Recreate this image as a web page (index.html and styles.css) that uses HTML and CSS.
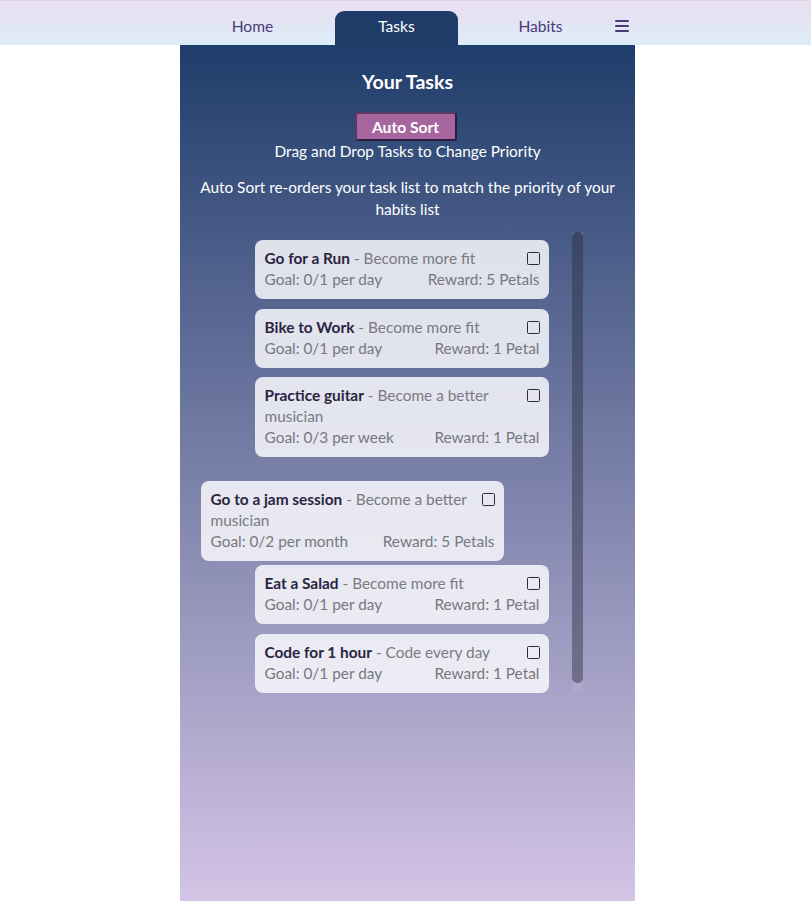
FILE: index.html
```html
<!DOCTYPE html>
<html lang="en">
<head>
<meta charset="utf-8">
<title>Your Tasks</title>
<link rel="stylesheet" href="styles.css">
</head>
<body>
<header class="topbar">
  <nav class="nav">
    <a class="nav-item">Home</a>
    <a class="nav-item active">Tasks</a>
    <a class="nav-item">Habits</a>
    <span class="burger" aria-label="Menu"><i></i><i></i><i></i></span>
  </nav>
</header>
<main class="page">
  <h1 class="title">Your Tasks</h1>
  <button class="sort-btn">Auto Sort</button>
  <p class="hint">Drag and Drop Tasks to Change Priority</p>
  <p class="info">Auto Sort re-orders your task list to match the priority of your habits list</p>
  <div class="list-wrap">
    <div class="list">
      <div class="card">
        <div class="row"><span class="name"><b>Go for a Run</b> - Become more fit</span><span class="check"></span></div>
        <div class="row meta"><span>Goal: 0/1 per day</span><span>Reward: 5 Petals</span></div>
      </div>
      <div class="card">
        <div class="row"><span class="name"><b>Bike to Work</b> - Become more fit</span><span class="check"></span></div>
        <div class="row meta"><span>Goal: 0/1 per day</span><span>Reward: 1 Petal</span></div>
      </div>
      <div class="card">
        <div class="row"><span class="name"><b>Practice guitar</b> - Become a better musician</span><span class="check"></span></div>
        <div class="row meta"><span>Goal: 0/3 per week</span><span>Reward: 1 Petal</span></div>
      </div>
      <div class="card dragging">
        <div class="row"><span class="name"><b>Go to a jam session</b> - Become a better musician</span><span class="check"></span></div>
        <div class="row meta"><span>Goal: 0/2 per month</span><span>Reward: 5 Petals</span></div>
      </div>
      <div class="card">
        <div class="row"><span class="name"><b>Eat a Salad</b> - Become more fit</span><span class="check"></span></div>
        <div class="row meta"><span>Goal: 0/1 per day</span><span>Reward: 1 Petal</span></div>
      </div>
      <div class="card">
        <div class="row"><span class="name"><b>Code for 1 hour</b> - Code every day</span><span class="check"></span></div>
        <div class="row meta"><span>Goal: 0/1 per day</span><span>Reward: 1 Petal</span></div>
      </div>
    </div>
    <div class="scrollbar"><div class="thumb"></div></div>
  </div>
</main>
</body>
</html>
```

FILE: styles.css
```css
* { box-sizing: border-box; }
html, body { margin: 0; padding: 0; }
body {
  background: #ffffff;
  font-family: Lato, "Open Sans", sans-serif;
  min-height: 100vh;
}
.topbar {
  height: 45px;
  background: linear-gradient(to bottom, #e9e2f3 0%, #e6e2f3 30%, #dcedf7 100%);
  border-top: 1px solid #ddd6e8;
}
.nav {
  width: 455px;
  margin-left: calc(50% - 225.5px);
  height: 44px;
  display: flex;
  align-items: flex-end;
  padding-left: 11px;
  gap: 21px;
}
.nav-item {
  width: 123px;
  height: 34px;
  display: flex;
  align-items: center;
  justify-content: center;
  font-size: 15.6px;
  color: #4a3a78;
  padding-bottom: 4px;
}
.nav-item.active {
  background: #1f3c69;
  color: #ffffff;
  border-radius: 9px 9px 0 0;
}
.burger {
  margin-left: -8px;
  width: 14px;
  height: 34px;
  display: flex;
  flex-direction: column;
  justify-content: center;
  gap: 3px;
  padding-bottom: 4px;
}
.burger i {
  display: block;
  height: 2px;
  background: #4a3a78;
  border-radius: 1px;
}
.page {
  width: 455px;
  margin-left: calc(50% - 225.5px);
  min-height: calc(100vh - 45px);
  background: linear-gradient(to bottom, #1f3d6b 0%, #d4c4e6 100%);
  padding: 25px 20px 40px;
  display: flex;
  flex-direction: column;
  align-items: center;
  color: #ffffff;
}
.title {
  margin: 0;
  font-size: 19.6px;
  line-height: 24px;
  font-weight: 700;
}
.sort-btn {
  margin-top: 18px;
  margin-right: 4px;
  width: 102px;
  height: 29px;
  background: #a6659f;
  color: #ffffff;
  font-family: Lato, sans-serif;
  font-weight: 700;
  font-size: 15.6px;
  border: 2px solid #2e1c3a;
  border-top-color: #5a3a60;
  border-left-color: #5a3a60;
  border-radius: 3px;
  padding: 0;
}
.hint {
  margin: 0;
  font-size: 15.4px;
  line-height: 21px;
}
.info {
  margin: 14px 0 0;
  font-size: 15.4px;
  line-height: 22px;
  text-align: center;
}
.list-wrap {
  margin-top: 12px;
  display: flex;
  gap: 23px;
  padding-left: 22px;
}
.list {
  width: 294px;
  padding-top: 8px;
  display: flex;
  flex-direction: column;
  gap: 9.5px;
}
.card {
  background: rgba(248, 248, 252, 0.86);
  border-radius: 8px;
  padding: 8px 9px 9px 10px;
  font-size: 15.4px;
  line-height: 21px;
  color: #7a7a82;
}
.card.dragging {
  width: 303px;
  transform: translateX(-54px);
  margin-top: 14.5px;
  margin-bottom: -5.5px;
}
.row {
  display: flex;
  justify-content: space-between;
  align-items: flex-start;
}
.name { flex: 1; padding-right: 8px; }
.name b { color: #2a2442; font-weight: 700; }
.check {
  flex: none;
  width: 13px;
  height: 13px;
  margin-top: 4px;
  border: 1.6px solid #2d2a40;
  border-radius: 1.5px;
}
.meta { color: #77787f; }
.scrollbar {
  width: 11px;
  height: 460px;
  background: rgba(220, 220, 235, 0.12);
  border-radius: 0 0 2px 2px;
}
.thumb {
  height: 451px;
  background: rgba(5, 8, 25, 0.36);
  border-radius: 5px;
}
```
